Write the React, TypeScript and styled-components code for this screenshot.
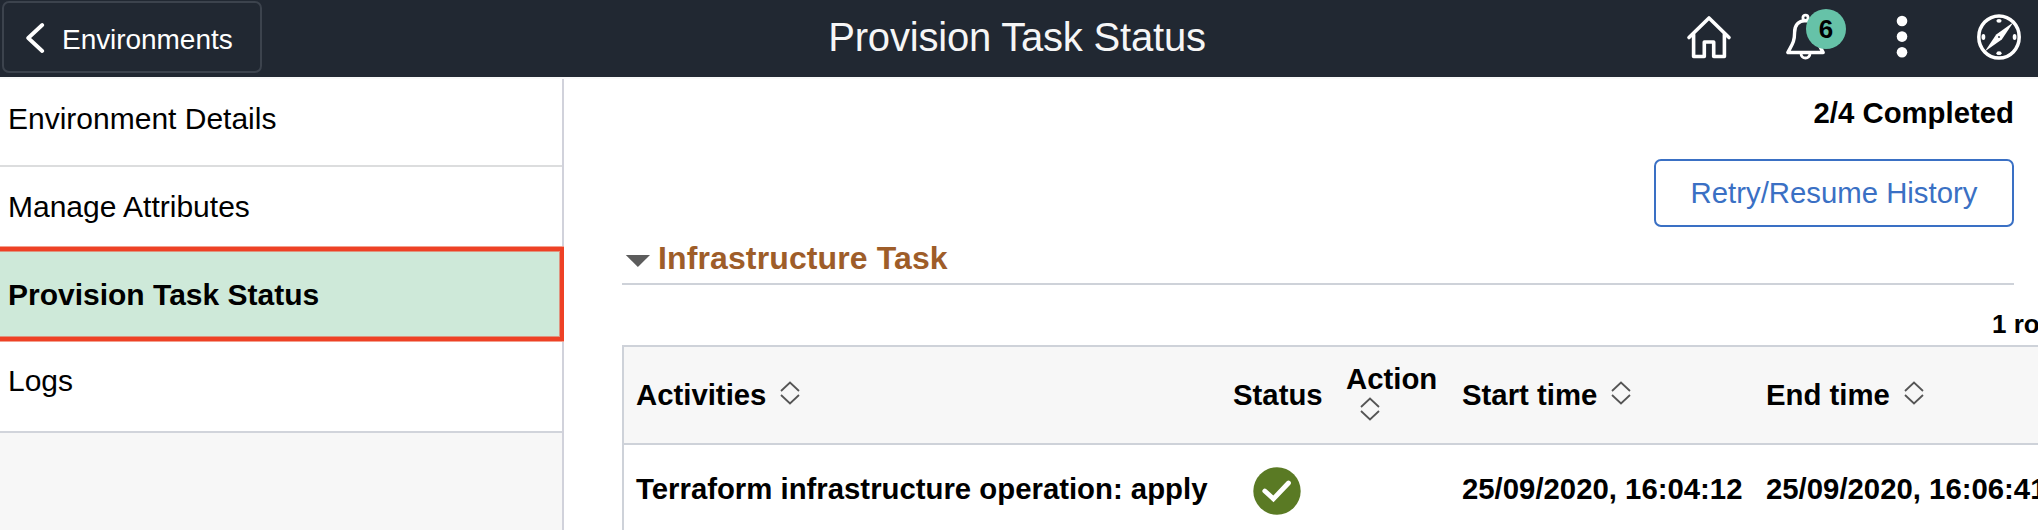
import React from 'react';
import styled, { createGlobalStyle } from 'styled-components';

const GlobalStyle = createGlobalStyle`
  *, *::before, *::after { box-sizing: border-box; }
  html, body { margin: 0; padding: 0; background: #fff; overflow: hidden; }
  body { font-family: "Liberation Sans", Arial, sans-serif; color: #000; }
  button { font-family: inherit; cursor: pointer; }
`;

const Page = styled.div`
  width: 100%;
  height: 530px;
  overflow: hidden;
  display: flex;
  flex-direction: column;
`;

const Header = styled.header`
  height: 79px;
  flex: none;
  background: #212832;
  border-bottom: 2px solid #f9f9f9;
  display: grid;
  grid-template-columns: 1fr auto 1fr;
  align-items: start;
`;

const BackButton = styled.button`
  justify-self: start;
  display: flex;
  align-items: center;
  gap: 16px;
  width: 260px;
  height: 72px;
  margin: 1px 0 0 2px;
  padding: 5px 0 0 22px;
  border: 2px solid #3c434d;
  border-radius: 7px;
  background: transparent;
  color: #fff;
  font-size: 28px;
  line-height: 32px;
  letter-spacing: -0.05px;

  svg { margin-bottom: 3px; }
`;

const Title = styled.h1`
  margin: 14px 4px 0 0;
  font-size: 40px;
  line-height: 46px;
  font-weight: 400;
  letter-spacing: -0.2px;
  color: #f6f6f6;
  white-space: nowrap;
`;

const Actions = styled.nav`
  justify-self: end;
  display: flex;
  align-items: center;
  height: 74px;
  padding-right: 17px;
`;

const IconButton = styled.button<{ $gap?: number }>`
  position: relative;
  display: flex;
  padding: 0;
  border: 0;
  background: none;
  margin-left: ${(p) => p.$gap ?? 0}px;
`;

const Badge = styled.span`
  position: absolute;
  left: 21px;
  top: -4px;
  width: 40px;
  height: 40px;
  border-radius: 50%;
  background: #66c2a8;
  color: #000;
  font-size: 26px;
  line-height: 40px;
  font-weight: 700;
  text-align: center;
`;

const Body = styled.div`
  flex: 1;
  display: flex;
  min-height: 0;
`;

const Sidebar = styled.aside`
  width: 564px;
  flex: none;
  background: #f7f7f7;
  border-right: 2px solid #d1d2db;
`;

const MenuItem = styled.a<{ $height: number; $top?: number; $edge?: string }>`
  display: block;
  height: ${(p) => p.$height}px;
  padding: ${(p) => p.$top ?? 23}px 0 0 8px;
  background: #fff;
  border-bottom: ${(p) => (p.$edge ? `2px solid ${p.$edge}` : '0')};
  font-size: 30px;
  line-height: 34px;
`;

const SelectedItem = styled.a`
  display: block;
  position: relative;
  height: 94px;
  margin: 1px -2px 1px -6px;
  padding: 27px 0 0 9px;
  background: #cee9d9;
  border: 4px solid #ee4125;
  border-width: 4px 4px 4px 5px;
  box-shadow: 0 -1px 0 #f3a08f, 0 1px 0 #f3a08f, inset 0 0 0 1px #de9480;
  font-size: 30px;
  line-height: 34px;
  font-weight: 700;
`;

const SidebarList = styled.div`
  background: #fff;
`;

const Main = styled.main`
  flex: 1;
  min-width: 0;
  padding-left: 58px;
  overflow: hidden;
`;

const Summary = styled.div`
  display: flex;
  flex-direction: column;
  align-items: flex-end;
  padding: 17px 24px 0 0;
`;

const Progress = styled.div`
  font-size: 29.33px;
  line-height: 34px;
  font-weight: 700;
`;

const HistoryButton = styled.button`
  width: 360px;
  height: 68px;
  margin-top: 29px;
  padding: 0;
  border: 2px solid #3a70c4;
  border-radius: 7px;
  background: #fff;
  color: #3a70c4;
  font-size: 29.33px;
  line-height: 64px;
`;

const SectionHeader = styled.div`
  display: flex;
  align-items: center;
  gap: 7px;
  height: 58px;
  margin-right: 24px;
  padding: 6px 0 0 3px;
  border-bottom: 2px solid #ced2d9;

  svg { margin-top: 6px; }
`;

const SectionTitle = styled.h2`
  margin: 0;
  font-size: 32px;
  line-height: 36px;
  letter-spacing: 0.12px;
  color: #9e5d29;
`;

const RowCount = styled.div`
  height: 60px;
  padding-top: 24px;
  margin-left: 1370px;
  font-size: 26px;
  line-height: 30px;
  font-weight: 700;
  white-space: nowrap;
`;

const Grid = styled.div`
  width: 1500px;
  border: 2px solid #ced2d9;
`;

const GridRow = styled.div<{ $head?: boolean }>`
  display: grid;
  grid-template-columns: 597px 113px 116px 304px 366px;
  height: 98px;
  align-items: center;
  background: ${(p) => (p.$head ? '#f7f7f7' : '#fff')};
  border-bottom: 2px solid #ced2d9;
  font-size: 29.33px;
  line-height: 34px;
  font-weight: 700;
  white-space: nowrap;
`;

const Cell = styled.div<{ $shift?: number }>`
  display: flex;
  align-items: center;
  gap: 14px;
  padding: 0 0 ${(p) => p.$shift ?? 0}px 12px;

  svg { margin-bottom: 4px; }
`;

const StackedCell = styled(Cell)`
  flex-direction: column;
  align-items: flex-start;
  gap: 1px;
  padding-bottom: 8px;

  svg { margin: 0 0 0 14px; }
`;

const StatusCell = styled.div`
  display: flex;
  padding: 0 0 4px 32px;
`;

const SortIcon = () => (
  <svg width="20" height="24" viewBox="0 0 20 24" fill="none" stroke="#555" strokeWidth="1.8">
    <path d="M1 10 10 1.6 19 10M1 14 10 22.4 19 14" />
  </svg>
);

const HomeIcon = () => (
  <svg width="46" height="46" viewBox="0 0 46 46" fill="none" stroke="#fff" strokeWidth="3.6" strokeLinejoin="round" strokeLinecap="round">
    <path d="M3 23.5 23 4 43 23.5" />
    <path d="M7.6 20.5V42.5H18.3V28H27.7V42.5H38.4V20.5" />
  </svg>
);

const BellIcon = () => (
  <svg width="42" height="48" viewBox="0 0 42 48" fill="none" stroke="#fff" strokeWidth="3.4" strokeLinejoin="round">
    <circle cx="20.5" cy="4.7" r="2.6" strokeWidth="2.8" />
    <path d="M20.5 7.6C13.5 8 9.6 12 9.6 19.5C9.6 29 7 31.5 2.8 39.5H38.2C34 31.5 31.4 29 31.4 19.5C31.4 12 27.5 8 20.5 7.6Z" />
    <path d="M16 40.5A4.5 4.5 0 0 0 25 40.5" strokeWidth="2.8" />
  </svg>
);

const MoreIcon = () => (
  <svg width="12" height="44" viewBox="0 0 12 44" fill="#fff">
    <circle cx="6" cy="6" r="5.3" />
    <circle cx="6" cy="21.6" r="5.3" />
    <circle cx="6" cy="37.2" r="5.3" />
  </svg>
);

const CompassIcon = () => (
  <svg width="44" height="46" viewBox="0 0 44 46" fill="#fff">
    <ellipse cx="22" cy="23" rx="20.2" ry="21.1" fill="none" stroke="#fff" strokeWidth="3.5" />
    <ellipse cx="22" cy="6.8" rx="2.6" ry="1.9" />
    <ellipse cx="22" cy="39.2" rx="2.6" ry="1.9" />
    <ellipse cx="6.4" cy="23" rx="1.9" ry="2.9" />
    <ellipse cx="37.6" cy="23" rx="1.9" ry="2.9" />
    <path d="M36.4 8.3 24.8 25.4 7.8 37.6 19.2 20.6Z" />
    <circle cx="22" cy="23" r="0.9" fill="#212832" />
  </svg>
);

const CheckIcon = () => (
  <svg width="48" height="48" viewBox="0 0 48 48" fill="none">
    <circle cx="24" cy="24" r="23.7" fill="#5a7a24" />
    <path d="M11.8 24 20.4 31.8 35.5 16" stroke="#fff" strokeWidth="4.8" strokeLinecap="round" />
  </svg>
);

export default function App() {
  return (
    <Page>
      <GlobalStyle />
      <Header>
        <BackButton>
          <svg width="20" height="32" viewBox="0 0 20 32" fill="none" stroke="#fff" strokeWidth="3.8" strokeLinecap="round" strokeLinejoin="round">
            <path d="M16.2 3 2.2 16 16.2 29" />
          </svg>
          Environments
        </BackButton>
        <Title>Provision Task Status</Title>
        <Actions>
          <IconButton aria-label="Home"><HomeIcon /></IconButton>
          <IconButton aria-label="Notifications" $gap={53}>
            <BellIcon />
            <Badge>6</Badge>
          </IconButton>
          <IconButton aria-label="More actions" $gap={69}><MoreIcon /></IconButton>
          <IconButton aria-label="Navigator" $gap={69}><CompassIcon /></IconButton>
        </Actions>
      </Header>
      <Body>
        <Sidebar>
          <SidebarList>
            <MenuItem $height={88} $edge="#dcddde">Environment Details</MenuItem>
            <MenuItem $height={79}>Manage Attributes</MenuItem>
            <SelectedItem>Provision Task Status</SelectedItem>
            <MenuItem $height={91} $top={22} $edge="#d1d4db">Logs</MenuItem>
          </SidebarList>
        </Sidebar>
        <Main>
          <Summary>
            <Progress>2/4 Completed</Progress>
            <HistoryButton>Retry/Resume History</HistoryButton>
          </Summary>
          <SectionHeader>
            <svg width="26" height="12" viewBox="0 0 26 12" fill="#5c5c5c">
              <path d="M0.8 0H25L12.9 12Z" />
            </svg>
            <SectionTitle>Infrastructure Task</SectionTitle>
          </SectionHeader>
          <RowCount>1 row</RowCount>
          <Grid>
            <GridRow $head>
              <Cell>Activities <SortIcon /></Cell>
              <Cell>Status</Cell>
              <StackedCell>Action <SortIcon /></StackedCell>
              <Cell>Start time <SortIcon /></Cell>
              <Cell>End time <SortIcon /></Cell>
            </GridRow>
            <GridRow>
              <Cell $shift={8}>Terraform infrastructure operation: apply</Cell>
              <StatusCell><CheckIcon /></StatusCell>
              <Cell />
              <Cell $shift={8}>25/09/2020, 16:04:12</Cell>
              <Cell $shift={8}>25/09/2020, 16:06:41</Cell>
            </GridRow>
          </Grid>
        </Main>
      </Body>
    </Page>
  );
}
